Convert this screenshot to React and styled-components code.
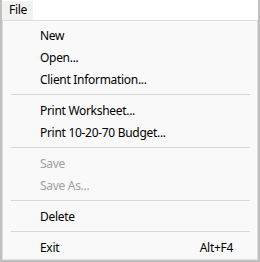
import React from "react";
import styled, { createGlobalStyle } from "styled-components";

const GlobalStyle = createGlobalStyle`
  html, body {
    margin: 0;
    padding: 0;
    background: #ffffff;
  }
  body {
    font-family: "Noto Sans", "Liberation Sans", Arial, sans-serif;
    font-size: 12px;
    letter-spacing: -0.3px;
    color: #000;
  }
`;

const menuItems = [
  { label: "New" },
  { label: "Open..." },
  { label: "Client Information..." },
  { separator: true },
  { label: "Print Worksheet..." },
  { label: "Print 10-20-70 Budget..." },
  { separator: true },
  { label: "Save", disabled: true },
  { label: "Save As...", disabled: true },
  { separator: true },
  { label: "Delete" },
  { separator: true },
  { label: "Exit", shortcut: "Alt+F4" },
];

function App() {
  return (
    <>
      <GlobalStyle />
      <Frame>
        <MenuBar>
          <MenuTitle>File</MenuTitle>
        </MenuBar>
        <MenuPanel>
          {menuItems.map((item, i) =>
            item.separator ? (
              <Separator key={i} />
            ) : (
              <Item key={i} $disabled={item.disabled}>
                <span>{item.label}</span>
                {item.shortcut && <Shortcut>{item.shortcut}</Shortcut>}
              </Item>
            )
          )}
        </MenuPanel>
      </Frame>
    </>
  );
}

export default App;

const Frame = styled.div`
  width: 260px;
  height: 262px;
  box-sizing: border-box;
  display: flex;
  flex-direction: column;
  border: 2px solid #bfbfbf;
  border-top: none;
  background: #ffffff;
`;

const MenuBar = styled.div`
  height: 20px;
  display: flex;
  align-items: flex-end;
  background: #ffffff;
`;

const MenuTitle = styled.div`
  height: 19px;
  line-height: 18px;
  padding: 0 6px 0 7px;
  background: #f2f2f2;
`;

const MenuPanel = styled.div`
  flex: 1;
  display: flex;
  flex-direction: column;
  padding-top: 3px;
  background: #f9f9f9;
  border: 1px solid #dcdcdc;
  border-bottom-color: #e6e6e6;
`;

const Item = styled.div`
  height: 22px;
  display: flex;
  align-items: center;
  justify-content: space-between;
  padding: 0 24px 0 37px;
  color: ${(p) => (p.$disabled ? "#a0a0a0" : "#000000")};
  white-space: nowrap;
`;

const Shortcut = styled.span`
  color: #000000;
`;

const Separator = styled.div`
  height: 9px;
  display: flex;
  align-items: center;
  padding: 0 7px 0 8px;

  &::after {
    content: "";
    flex: 1;
    height: 1px;
    background: #d7d7d7;
  }
`;
